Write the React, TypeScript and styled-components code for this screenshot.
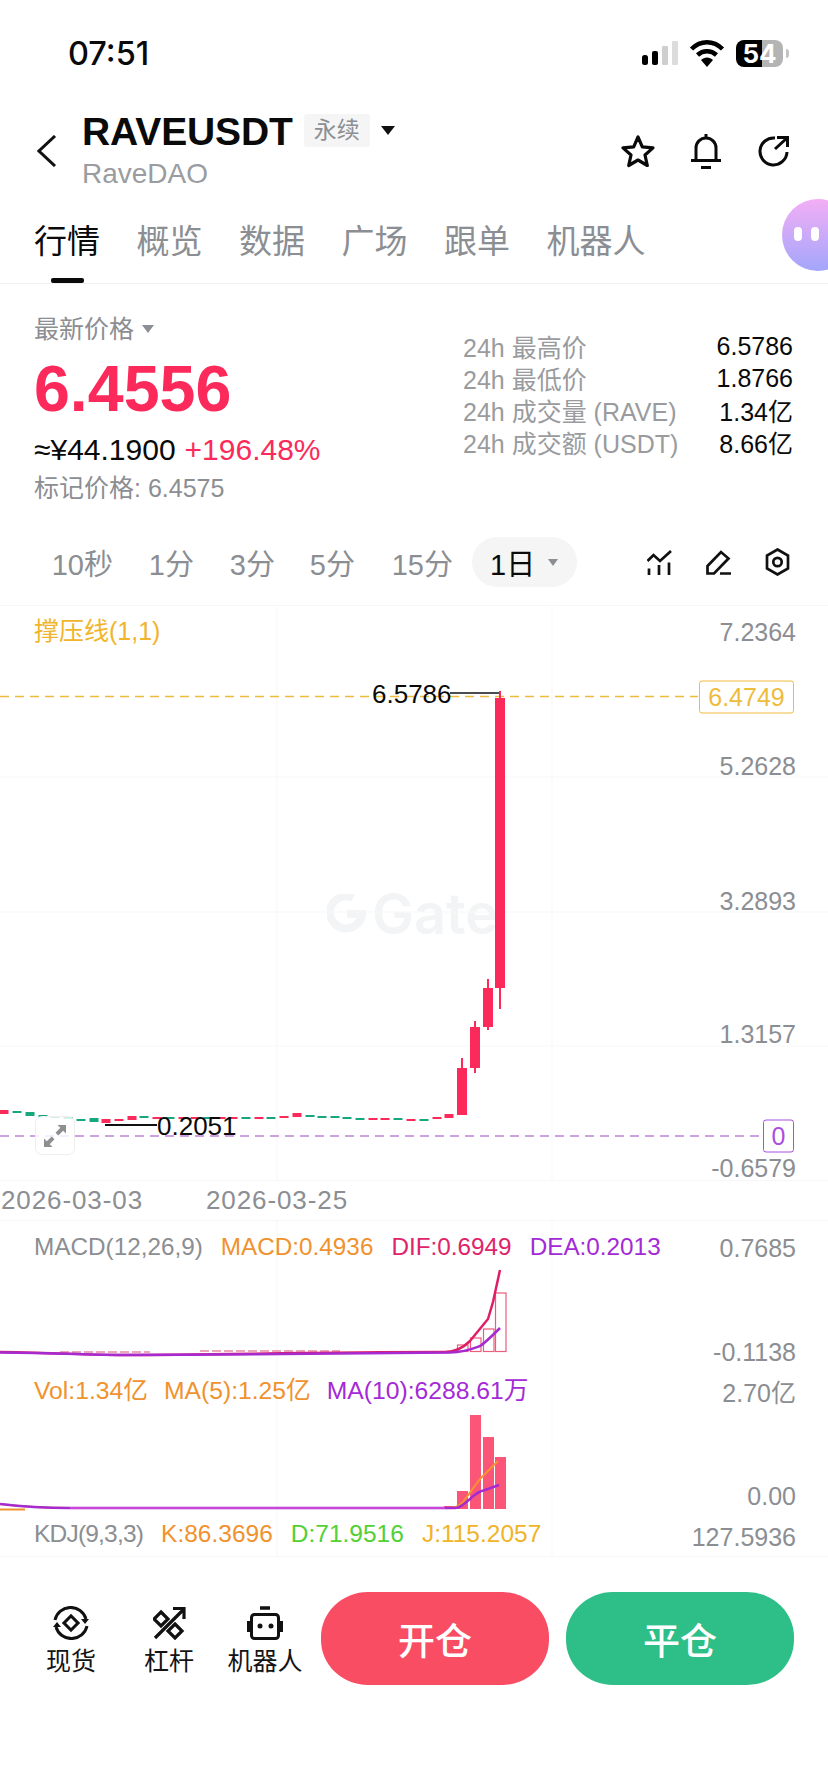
import React, { FC } from 'react';
import styled, { createGlobalStyle } from 'styled-components';

const RED = '#fb2a5a';
const GREEN = '#17a77e';
const GRAY = '#8b8e92';
const FONT = '"Liberation Sans", "Noto Sans CJK SC", sans-serif';

const GlobalStyle = createGlobalStyle`
  * {
    margin: 0;
    box-sizing: border-box;
  }

  body {
    background: #fff;
    font-family: ${FONT};
  }
`;

const Page = styled.div`
  position: relative;
  width: 828px;
  height: 1792px;
  overflow: hidden;
  background: #fff;
`;

// Status bar =====================================================================================

const StatusBar = styled.div`
  height: 106px;
  padding: 0 45px 0 68px;
  display: flex;
  align-items: center;
  justify-content: space-between;
`;

const Clock = styled.span`
  font-family: Inter, sans-serif;
  font-size: 32.5px;
  font-weight: 500;
  color: #0a0a0a;
`;

const StatusIcons = styled.div`
  display: flex;
  align-items: center;
  gap: 11px;
`;

const Battery = styled.div`
  position: relative;
  width: 47px;
  height: 27px;
  border-radius: 8px;
  overflow: visible;
  background: linear-gradient(90deg, #000 0 56%, #b4b4b4 56% 100%);
  color: #fff;
  font-family: Inter, sans-serif;
  font-size: 26px;
  font-weight: 700;
  line-height: 27px;
  text-align: center;

  &::after {
    content: '';
    position: absolute;
    right: -6px;
    top: 9px;
    width: 3px;
    height: 9px;
    border-radius: 0 3px 3px 0;
    background: #c4c4c4;
  }
`;

// Header =========================================================================================

const Header = styled.div`
  height: 92px;
  padding: 0 39px 0 37px;
  display: flex;
  align-items: flex-start;
`;

const BackButton = styled.div`
  width: 45px;
  padding-top: 29px;
  display: flex;
`;

const TitleBlock = styled.div`
  flex: 1;
  padding-top: 5px;
`;

const TitleRow = styled.div`
  display: flex;
  align-items: center;
  height: 38px;
`;

const Symbol = styled.h1`
  margin-top: 3px;
  font-size: 39px;
  font-weight: 700;
  line-height: 38px;
  color: #0a0a0a;
  letter-spacing: -0.1px;
`;

const Tag = styled.span`
  margin-left: 11px;
  width: 66px;
  height: 33px;
  background: #f5f5f5;
  border-radius: 3px;
  color: ${GRAY};
  font-size: 23px;
  line-height: 33px;
  text-align: center;
`;

const Caret = styled.span<{ $size?: number; $color?: string }>`
  display: inline-block;
  width: 0;
  height: 0;
  border-left: ${(p) => p.$size ?? 7}px solid transparent;
  border-right: ${(p) => p.$size ?? 7}px solid transparent;
  border-top: ${(p) => (p.$size ?? 7) * 1.4}px solid ${(p) => p.$color ?? '#111'};
`;

const TagCaret = styled(Caret)`
  margin-left: 11px;
`;

const Subtitle = styled.div`
  margin-top: 9px;
  font-size: 28px;
  line-height: 32px;
  color: #9a9c9f;
`;

const HeaderActions = styled.div`
  display: flex;
  align-items: center;
  gap: 35px;
  padding-top: 27px;
`;

// Tabs ===========================================================================================

const Tabs = styled.div`
  height: 86px;
  padding: 28px 0 0 34px;
  display: flex;
  gap: 36.5px;
  border-bottom: 1px solid #f0f0f0;
`;

const Tab = styled.div<{ $active?: boolean }>`
  position: relative;
  height: 57px;
  font-size: 33px;
  line-height: 32px;
  color: ${(p) => (p.$active ? '#0a0a0a' : GRAY)};

  ${(p) => p.$active && `
    &::after {
      content: '';
      position: absolute;
      left: 17px;
      bottom: 0;
      width: 33px;
      height: 5px;
      border-radius: 2px;
      background: #0a0a0a;
    }
  `}
`;

const Assistant = styled.div`
  position: absolute;
  left: 782px;
  top: 199px;
  width: 72px;
  height: 72px;
  border-radius: 50%;
  background: linear-gradient(180deg, #f3aef5 0%, #a3a6fb 100%);
  display: flex;
  gap: 9px;
  padding: 28px 0 0 12px;
`;

const AssistantEye = styled.span`
  width: 8px;
  height: 14px;
  border-radius: 4px;
  background: #fff;
`;

// Price ==========================================================================================

const PriceSection = styled.div`
  height: 253px;
  padding: 30px 35px 0 34px;
  display: flex;
  justify-content: space-between;
`;

const PriceColumn = styled.div`
  display: flex;
  flex-direction: column;
`;

const PriceLabel = styled.div`
  display: flex;
  align-items: center;
  gap: 8px;
  font-size: 25px;
  line-height: 30px;
  color: ${GRAY};
`;

const LastPrice = styled.div`
  margin-top: 12px;
  font-size: 64.5px;
  font-weight: 700;
  line-height: 66px;
  color: ${RED};
`;

const ChangeRow = styled.div`
  margin-top: 12px;
  display: flex;
  gap: 9px;
  font-size: 30px;
  line-height: 32px;
  color: #0a0a0a;
`;

const Change = styled.span`
  color: ${RED};
`;

const MarkPrice = styled.div`
  margin-top: 7px;
  font-size: 25px;
  line-height: 30px;
  color: ${GRAY};
`;

const Stats = styled.div`
  width: 330px;
  padding-top: 16px;
  display: flex;
  flex-direction: column;
`;

const StatRow = styled.div`
  height: 32px;
  display: flex;
  align-items: center;
  justify-content: space-between;
  font-size: 25px;
  color: #999b9e;
`;

const StatValue = styled.span`
  color: #0a0a0a;
`;

// Timeframes =====================================================================================

const Timeframes = styled.div`
  height: 68px;
  padding: 0 38px 18px 0;
  display: flex;
  align-items: center;
`;

const Frame = styled.div<{ $width: number }>`
  width: ${(p) => p.$width}px;
  text-align: right;
  font-size: 29px;
  color: ${GRAY};
`;

const ActiveFrame = styled.div`
  margin-left: 19px;
  width: 105px;
  height: 50px;
  padding-left: 18px;
  border-radius: 25px;
  background: #f5f5f5;
  display: flex;
  align-items: center;
  gap: 13px;
  font-size: 29px;
  color: #0a0a0a;
`;

const ChartTools = styled.div`
  margin-left: auto;
  display: flex;
  align-items: center;
  gap: 34px;
`;

// Chart panes ====================================================================================

const Pane = styled.div<{ $height: number }>`
  position: relative;
  height: ${(p) => p.$height}px;
  overflow: hidden;
`;

const PaneDrawing = styled.svg`
  position: absolute;
  left: 0;
  top: 0;
`;

const Watermark = styled.div`
  position: absolute;
  left: 327px;
  top: 286px;
  display: flex;
  align-items: center;
  gap: 6px;
  font-family: Inter, sans-serif;
  font-size: 56px;
  font-weight: 600;
  line-height: 46px;
  color: #f3f4f5;
`;

const PaneTitle = styled.div`
  position: relative;
  padding: 11px 0 0 34px;
  font-size: 25px;
  line-height: 30px;
  color: #f0b52a;
`;

const AxisLabel = styled.div<{ $top: number }>`
  position: absolute;
  right: 32px;
  top: ${(p) => p.$top}px;
  transform: translateY(-50%);
  font-size: 25px;
  line-height: 30px;
  color: ${GRAY};
`;

const LineTag = styled.div<{ $top: number; $color: string; $left: number; $right: number }>`
  position: absolute;
  left: ${(p) => p.$left}px;
  right: ${(p) => p.$right}px;
  top: ${(p) => p.$top}px;
  transform: translateY(-50%);
  height: 33px;
  border: 1px solid ${(p) => p.$color};
  border-radius: 3px;
  background: #fff;
  color: ${(p) => p.$color};
  font-size: 25px;
  line-height: 31px;
  text-align: center;
`;

const ExtremeLabel = styled.div<{ $top: number; $left: number }>`
  position: absolute;
  left: ${(p) => p.$left}px;
  top: ${(p) => p.$top}px;
  transform: translateY(-50%);
  font-size: 26px;
  line-height: 30px;
  color: #0a0a0a;
`;

const ExpandButton = styled.div`
  position: absolute;
  left: 35px;
  top: 511px;
  width: 40px;
  height: 39px;
  border: 1px solid #eeeeee;
  border-radius: 7px;
  background: rgba(255, 255, 255, 0.82);
  display: flex;
  align-items: center;
  justify-content: center;
`;

const DateRow = styled.div`
  height: 40px;
  padding-left: 1px;
  display: flex;
  align-items: center;
  gap: 63px;
  font-size: 26px;
  letter-spacing: 0.9px;
  color: ${GRAY};
  border-bottom: 1px solid #f6f6f6;
`;

const Legend = styled.div<{ $top: number; $size: number; $gap?: number }>`
  position: relative;
  padding: ${(p) => p.$top}px 0 0 34px;
  display: flex;
  gap: ${(p) => p.$gap ?? 18}px;
  font-size: ${(p) => p.$size}px;
  line-height: 30px;
  white-space: nowrap;
`;

const LegendItem = styled.span<{ $color: string; $tight?: boolean }>`
  color: ${(p) => p.$color};
  letter-spacing: ${(p) => (p.$tight ? '-0.8px' : '0')};
`;

// Bottom bar =====================================================================================

const BottomBar = styled.div`
  margin-top: 35px;
  padding: 0 34px 0 31px;
  display: flex;
  align-items: flex-start;
`;

const Shortcut = styled.div<{ $width: number }>`
  width: ${(p) => p.$width}px;
  padding-top: 14px;
  display: flex;
  flex-direction: column;
  align-items: center;
  gap: 4px;
  font-size: 25px;
  line-height: 34px;
  white-space: nowrap;
  color: #141414;
`;

const ShortcutIcon = styled.svg`
  display: block;
`;

const TradeButton = styled.div<{ $color: string; $gap: number }>`
  margin-left: ${(p) => p.$gap}px;
  width: 228px;
  height: 93px;
  border-radius: 47px / 45px;
  background: ${(p) => p.$color};
  color: #fff;
  font-size: 37px;
  font-weight: 500;
  display: flex;
  align-items: center;
  justify-content: center;
`;

// Data ===========================================================================================

// tiny daily candles: x, y, up?, thick?
const smallCandles: [number, number, boolean, boolean][] = [
  [4, 1113, true, true], [17, 1113, false, false], [30, 1115, false, true], [43, 1117, false, false],
  [55, 1118, false, false], [68, 1119, false, false], [81, 1121, false, false], [94, 1121, false, true],
  [106, 1122, true, true], [119, 1121, true, false], [132, 1119, true, true], [144, 1118, false, false],
  [157, 1119, true, false], [170, 1119, false, false], [183, 1119, true, false], [195, 1119, true, false],
  [208, 1119, false, false], [221, 1119, true, false], [233, 1119, true, false], [246, 1119, false, false],
  [259, 1119, true, false], [271, 1119, false, false], [284, 1118, true, false], [297, 1116, true, true],
  [310, 1117, false, false], [322, 1118, false, false], [335, 1118, false, false], [347, 1119, false, false],
  [360, 1120, false, false], [373, 1120, true, false], [385, 1120, true, false], [398, 1120, false, false],
  [411, 1121, true, false], [424, 1121, false, false], [437, 1119, true, false], [449, 1117, true, true],
];

const bigCandles = [
  { x: 457, top: 1069, bottom: 1116, high: 1059, low: 1116 },
  { x: 470, top: 1028, bottom: 1069, high: 1022, low: 1074 },
  { x: 483, top: 989, bottom: 1028, high: 980, low: 1031 },
  { x: 495, top: 699, bottom: 989, high: 692, low: 1010 },
];

const volumeBars = [
  { x: 444, top: 1507 },
  { x: 457, top: 1492 },
  { x: 470, top: 1416 },
  { x: 483, top: 1438 },
  { x: 495, top: 1458 },
];

const macdBars = [
  { x: 457, top: 1346 },
  { x: 470, top: 1339 },
  { x: 483, top: 1330 },
  { x: 495, top: 1294 },
];

const stats = [
  ['24h 最高价', '6.5786'],
  ['24h 最低价', '1.8766'],
  ['24h 成交量 (RAVE)', '1.34亿'],
  ['24h 成交额 (USDT)', '8.66亿'],
];

const frames: [string, number][] = [['10秒', 113], ['1分', 81], ['3分', 81], ['5分', 80], ['15分', 98]];

const tabs = ['行情', '概览', '数据', '广场', '跟单', '机器人'];

const GridLines: FC<{ top: number; bottom: number; rows?: number[] }> = ({ top, bottom, rows = [] }) => (
  <g stroke="#f7f7f7" strokeWidth="1">
    <line x1="277" y1={top} x2="277" y2={bottom} />
    <line x1="552" y1={top} x2="552" y2={bottom} />
    {rows.map((y) => <line key={y} x1="0" y1={y} x2="828" y2={y} />)}
  </g>
);

const App: FC = () => (
  <Page>
    <GlobalStyle />
    <StatusBar>
      <Clock>07:51</Clock>
      <StatusIcons>
        <svg width="36" height="24" viewBox="0 0 36 24">
          <rect x="0" y="14" width="6" height="10" rx="2.5" fill="#000" />
          <rect x="10" y="10" width="6" height="14" rx="2" fill="#000" />
          <rect x="20" y="5" width="6" height="19" rx="1" fill="#cfcfcf" />
          <rect x="30" y="0" width="6" height="24" rx="1" fill="#dcdcdc" />
        </svg>
        <svg width="36" height="27" viewBox="0 0 35 27">
          <path d="M2 9 C11 0 24 0 33 9 M8 15 C13.500 10 21.500 10 27 15" fill="none" stroke="#000" strokeWidth="4.500" />
          <path d="M11.500 20 C15 16.500 20 16.500 23.500 20 L17.500 27 Z" fill="#000" />
        </svg>
        <Battery>54</Battery>
      </StatusIcons>
    </StatusBar>

    <Header>
      <BackButton>
        <svg width="20" height="32" viewBox="0 0 20 32">
          <polyline points="18,1 2,16 18,31" fill="none" stroke="#111" strokeWidth="3" />
        </svg>
      </BackButton>
      <TitleBlock>
        <TitleRow>
          <Symbol>RAVEUSDT</Symbol>
          <Tag>永续</Tag>
          <TagCaret />
        </TitleRow>
        <Subtitle>RaveDAO</Subtitle>
      </TitleBlock>
      <HeaderActions>
        <svg width="34" height="34" viewBox="0 0 34 34">
          <polygon points="17,3 21.300,12.800 32,13.900 24,21 26.300,31.500 17,26 7.700,31.500 10,21 2,13.900 12.700,12.800" fill="none" stroke="#0a0a0a" strokeWidth="3.200" strokeLinejoin="round" />
        </svg>
        <svg width="32" height="36" viewBox="0 0 32 36">
          <path d="M6 27 V15 a10 10 0 0 1 20 0 V27 M1 27.500 H31 M11 34.500 H21 M16 1 V5" fill="none" stroke="#0a0a0a" strokeWidth="3" />
        </svg>
        <svg width="32" height="32" viewBox="0 0 32 32">
          <path d="M18 3 A13.500 13.500 0 1 0 30 17 M18 14 L30 3 M20 2.500 H30.500 V12" fill="none" stroke="#0a0a0a" strokeWidth="3" />
        </svg>
      </HeaderActions>
    </Header>

    <Tabs>
      {tabs.map((tab, i) => <Tab key={tab} $active={i === 0}>{tab}</Tab>)}
    </Tabs>
    <Assistant>
      <AssistantEye />
      <AssistantEye />
    </Assistant>

    <PriceSection>
      <PriceColumn>
        <PriceLabel>
          最新价格
          <Caret $size={6} $color="#8b8e92" />
        </PriceLabel>
        <LastPrice>6.4556</LastPrice>
        <ChangeRow>
          ≈¥44.1900
          <Change>+196.48%</Change>
        </ChangeRow>
        <MarkPrice>标记价格: 6.4575</MarkPrice>
      </PriceColumn>
      <Stats>
        {stats.map(([label, value]) => (
          <StatRow key={label}>
            {label}
            <StatValue>{value}</StatValue>
          </StatRow>
        ))}
      </Stats>
    </PriceSection>

    <Timeframes>
      {frames.map(([label, width]) => <Frame key={label} $width={width}>{label}</Frame>)}
      <ActiveFrame>
        1日
        <Caret $size={5.500} $color="#8b8e92" />
      </ActiveFrame>
      <ChartTools>
        <svg width="25" height="25" viewBox="0 0 25 25">
          <path d="M0.500 11 L6.500 5 L13 11 L24 1 M2 18.500 V25 M12 15 V25 M22 12.500 V25" fill="none" stroke="#111" strokeWidth="2.700" />
        </svg>
        <svg width="25" height="25" viewBox="0 0 25 25">
          <path d="M1.500 16 L15 2 L22.500 8.500 L8 23.500 H1.500 Z M14 23.500 H25" fill="none" stroke="#111" strokeWidth="2.700" />
        </svg>
        <svg width="25" height="28" viewBox="0 0 25 28">
          <polygon points="12.500,1.500 23,7.500 23,20.500 12.500,26.500 2,20.500 2,7.500" fill="none" stroke="#111" strokeWidth="2.700" />
          <circle cx="12.500" cy="14" r="4.200" fill="none" stroke="#111" strokeWidth="2.700" />
        </svg>
      </ChartTools>
    </Timeframes>

    <Pane $height={576}>
      <Watermark>
        <svg width="39" height="40" viewBox="0 0 39 40">
          <path d="M26 4 A16 16 0 1 0 35 20 H20" fill="none" stroke="#f3f4f5" strokeWidth="8" />
        </svg>
        Gate
      </Watermark>
      <PaneDrawing width="828" height="576" viewBox="0 606 828 576">
        <GridLines top={606} bottom={1182} rows={[606.500, 778, 913, 1047, 1181.500]} />
        <line x1="0" y1="697.500" x2="698" y2="697.500" stroke="#eebc3c" strokeWidth="1.500" strokeDasharray="9 6" />
        <line x1="0" y1="1137" x2="762" y2="1137" stroke="#bd84dd" strokeWidth="1.500" strokeDasharray="9 6" />
        <line x1="450" y1="694" x2="500" y2="694" stroke="#111" strokeWidth="1.500" />
        <line x1="105" y1="1126" x2="157" y2="1126" stroke="#111" strokeWidth="2" />
        {smallCandles.map(([x, y, up, thick], i) => (
          <rect key={i} x={x - 4.500} y={y - (thick ? 2 : 1)} width="9" height={thick ? 4 : 2} fill={up ? RED : GREEN} />
        ))}
        {bigCandles.map((c) => (
          <g key={c.x} fill={RED}>
            <rect x={c.x + 4} y={c.high} width="2" height={c.low - c.high} />
            <rect x={c.x} y={c.top} width="10" height={c.bottom - c.top} />
          </g>
        ))}
      </PaneDrawing>
      <PaneTitle>撑压线(1,1)</PaneTitle>
      <AxisLabel $top={27}>7.2364</AxisLabel>
      <LineTag $top={92} $color="#eebc3c" $left={699} $right={34}>6.4749</LineTag>
      <ExtremeLabel $top={89} $left={372}>6.5786</ExtremeLabel>
      <AxisLabel $top={161}>5.2628</AxisLabel>
      <AxisLabel $top={296}>3.2893</AxisLabel>
      <AxisLabel $top={429}>1.3157</AxisLabel>
      <ExtremeLabel $top={521} $left={157}>0.2051</ExtremeLabel>
      <ExpandButton>
        <svg width="24" height="24" viewBox="0 0 24 24">
          <path d="M23 1 H14.500 L17.300 3.800 L12.500 8.700 L15.300 11.500 L20.200 6.700 L23 9.500 Z M1 23 H9.500 L6.700 20.200 L11.500 15.300 L8.700 12.500 L3.800 17.300 L1 14.500 Z" fill="#8d8f91" />
        </svg>
      </ExpandButton>
      <LineTag $top={531} $color="#a94fdc" $left={763} $right={34}>0</LineTag>
      <AxisLabel $top={563}>-0.6579</AxisLabel>
    </Pane>

    <DateRow>
      <span>2026-03-03</span>
      <span>2026-03-25</span>
    </DateRow>

    <Pane $height={150}>
      <PaneDrawing width="828" height="150" viewBox="0 1222 828 150">
        <GridLines top={1222} bottom={1372} />
        <path d="M60 1353 H150 M200 1352 H340" stroke="#e58aa0" strokeWidth="1.500" strokeDasharray="9 3" />
        {macdBars.map((b) => (
          <rect key={b.x} x={b.x + 0.500} y={b.top} width="10.500" height={1352.500 - b.top} fill="#fff" stroke="#ec5c7d" strokeWidth="1.200" />
        ))}
        <path d="M0 1353 C60 1354 90 1356 120 1356 C220 1356 300 1353 445 1353 C455 1353 462 1350 470 1342 L488 1320 L493 1303 L500 1271" fill="none" stroke="#de1f66" strokeWidth="2.500" />
        <path d="M0 1353.500 C60 1354 90 1356 120 1356 C220 1356 300 1354 450 1353.500 C465 1353 472 1350 480 1347 C485 1344 493 1336 500 1329" fill="none" stroke="#a52bd0" strokeWidth="2.500" />
      </PaneDrawing>
      <Legend $top={11} $size={24.300}>
        <LegendItem $color={GRAY}>MACD(12,26,9)</LegendItem>
        <LegendItem $color="#f0922e">MACD:0.4936</LegendItem>
        <LegendItem $color="#e0246b">DIF:0.6949</LegendItem>
        <LegendItem $color="#a42ad6">DEA:0.2013</LegendItem>
      </Legend>
      <AxisLabel $top={27}>0.7685</AxisLabel>
      <AxisLabel $top={131}>-0.1138</AxisLabel>
    </Pane>

    <Pane $height={144}>
      <PaneDrawing width="828" height="144" viewBox="0 1372 828 144">
        <GridLines top={1372} bottom={1516} />
        {volumeBars.map((b) => (
          <rect key={b.x} x={b.x} y={b.top} width="11" height={1510 - b.top} fill="#fb5677" />
        ))}
        <path d="M0 1510.500 H25" stroke="#f0922e" strokeWidth="2" />
        <path d="M0 1505 C25 1508 45 1509 70 1509 H445 C455 1509 458 1508 463 1503 L480 1480 L498 1462" fill="none" stroke="#f7932e" strokeWidth="2" />
        <path d="M0 1505 C25 1508 45 1509 70 1509 H455 C460 1509 464 1505 470 1500 C474 1496 480 1492 485 1491 L499 1486" fill="none" stroke="#a52bd0" strokeWidth="2.500" />
        <path d="M70 1509 H445" stroke="#f062e0" strokeWidth="1" />
      </PaneDrawing>
      <Legend $top={5} $size={24.700} $gap={16}>
        <LegendItem $color="#f0922e">Vol:1.34亿</LegendItem>
        <LegendItem $color="#f0922e">MA(5):1.25亿</LegendItem>
        <LegendItem $color="#a42ad6">MA(10):6288.61万</LegendItem>
      </Legend>
      <AxisLabel $top={22}>2.70亿</AxisLabel>
      <AxisLabel $top={125}>0.00</AxisLabel>
    </Pane>

    <Pane $height={42}>
      <PaneDrawing width="828" height="42" viewBox="0 1516 828 42">
        <GridLines top={1516} bottom={1558} rows={[1557.500]} />
      </PaneDrawing>
      <Legend $top={4} $size={24.500}>
        <LegendItem $color={GRAY} $tight>KDJ(9,3,3)</LegendItem>
        <LegendItem $color="#f0922e">K:86.3696</LegendItem>
        <LegendItem $color="#52d034">D:71.9516</LegendItem>
        <LegendItem $color="#f0b429">J:115.2057</LegendItem>
      </Legend>
      <AxisLabel $top={22}>127.5936</AxisLabel>
    </Pane>

    <BottomBar>
      <Shortcut $width={80}>
        <ShortcutIcon width="36" height="34" viewBox="0 0 36 34">
          <path d="M2 14 A16 16 0 0 1 33 13 M34 20 A16 16 0 0 1 3 21" fill="none" stroke="#111" strokeWidth="3" />
          <path d="M28 13 H36 L32 18 Z M0 21 H8 L4 16 Z" fill="#111" />
          <rect x="13" y="12" width="10" height="10" transform="rotate(45 18 17)" fill="none" stroke="#111" strokeWidth="3" />
        </ShortcutIcon>
        现货
      </Shortcut>
      <Shortcut $width={116}>
        <ShortcutIcon width="33" height="34" viewBox="0 0 33 34">
          <path d="M2 32 L31 3 M20 2.500 H31 V13" fill="none" stroke="#111" strokeWidth="3.200" />
          <polygon points="8,6 15,13 8,20 1,13" fill="none" stroke="#111" strokeWidth="3.200" />
          <polygon points="22,18 29,25 22,32 15,25" fill="none" stroke="#111" strokeWidth="3.200" />
        </ShortcutIcon>
        杠杆
      </Shortcut>
      <Shortcut $width={76}>
        <ShortcutIcon width="36" height="34" viewBox="0 0 36 34">
          <path d="M13 2 H23" stroke="#111" strokeWidth="3.500" />
          <rect x="4.500" y="8.500" width="27" height="24" rx="3" fill="none" stroke="#111" strokeWidth="3" />
          <path d="M1.500 15 V26 M34.500 15 V26" stroke="#111" strokeWidth="3" />
          <circle cx="13" cy="20" r="2.500" fill="#111" />
          <circle cx="24" cy="20" r="2.500" fill="#111" />
        </ShortcutIcon>
        机器人
      </Shortcut>
      <TradeButton $color="#f84d63" $gap={18}>开仓</TradeButton>
      <TradeButton $color="#2dbf87" $gap={17}>平仓</TradeButton>
    </BottomBar>
  </Page>
);

export default App;
